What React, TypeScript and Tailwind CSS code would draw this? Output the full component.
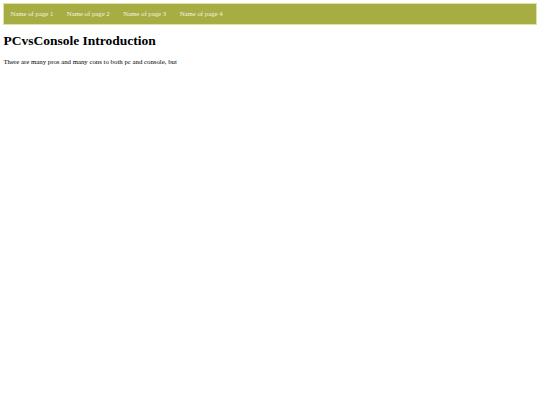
export default function App() {
  const pages = ['Name of page 1', 'Name of page 2', 'Name of page 3', 'Name of page 4'];

  return (
    <div className="min-h-[405px] bg-white p-[3.4px] font-['Liberation_Serif',serif] text-black">
      {/* Nav */}
      <ul className="flex border border-[#dfe2a6] bg-[#a6ad42] pl-0">
        {pages.map((p) => (
          <li key={p}>
            <a className="block py-[6px] pl-[6px] pr-[7.5px] text-[6.75px] leading-[8px] text-[#f4f5e0]">{p}</a>
          </li>
        ))}
      </ul>

      <h1 className="mt-[8px] mb-[8.5px] text-[13.5px] leading-[16px] font-bold">PCvsConsole Introduction</h1>
      <p className="text-[6.8px] leading-[8px]">
        There are many pros and many cons to both pc and console, but
      </p>
    </div>
  );
}
